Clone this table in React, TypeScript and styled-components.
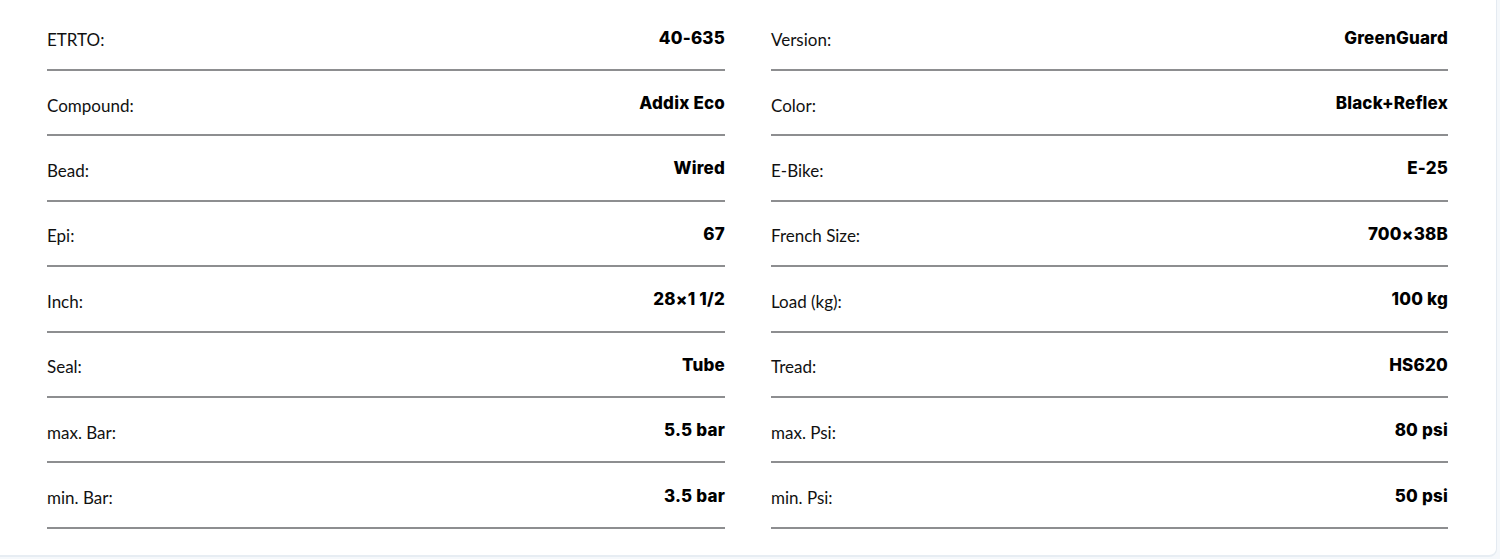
import styled, { createGlobalStyle } from 'styled-components';

const GlobalStyle = createGlobalStyle`
  html, body {
    margin: 0;
    padding: 0;
    background: #f5f8fb;
  }
  * {
    box-sizing: border-box;
  }
`;

interface Spec {
  label: string;
  value: string;
}

const leftSpecs: Spec[] = [
  { label: 'ETRTO:', value: '40-635' },
  { label: 'Compound:', value: 'Addix Eco' },
  { label: 'Bead:', value: 'Wired' },
  { label: 'Epi:', value: '67' },
  { label: 'Inch:', value: '28×1 1/2' },
  { label: 'Seal:', value: 'Tube' },
  { label: 'max. Bar:', value: '5.5 bar' },
  { label: 'min. Bar:', value: '3.5 bar' },
];

const rightSpecs: Spec[] = [
  { label: 'Version:', value: 'GreenGuard' },
  { label: 'Color:', value: 'Black+Reflex' },
  { label: 'E-Bike:', value: 'E-25' },
  { label: 'French Size:', value: '700×38B' },
  { label: 'Load (kg):', value: '100 kg' },
  { label: 'Tread:', value: 'HS620' },
  { label: 'max. Psi:', value: '80 psi' },
  { label: 'min. Psi:', value: '50 psi' },
];

function SpecColumn({ specs }: { specs: Spec[] }) {
  return (
    <Column>
      {specs.map((s) => (
        <Row key={s.label}>
          <Label>{s.label}</Label>
          <Value>{s.value}</Value>
        </Row>
      ))}
    </Column>
  );
}

export default function App() {
  return (
    <>
      <GlobalStyle />
      <Card>
        <SpecColumn specs={leftSpecs} />
        <SpecColumn specs={rightSpecs} />
      </Card>
    </>
  );
}

const Card = styled.section`
  width: 1497px;
  height: 557px;
  background: #ffffff;
  border-right: 1px solid #e4eaf1;
  border-bottom: 2px solid #e7edf3;
  border-bottom-right-radius: 8px;
  padding: 5.4px 48px 0 47px;
  display: grid;
  grid-template-columns: 678px 677px;
  column-gap: 46px;
`;

const Column = styled.div`
  display: flex;
  flex-direction: column;
`;

const Row = styled.div`
  height: 65.43px;
  display: flex;
  align-items: center;
  justify-content: space-between;
  padding-top: 3px;
  border-bottom: 2px solid #8d8e90;
`;

const Label = styled.span`
  font-family: 'Lato', 'Liberation Sans', sans-serif;
  font-size: 17px;
  color: #111;
  padding-top: 2px;
`;

const Value = styled.span`
  font-family: 'Inter', 'Liberation Sans', sans-serif;
  font-size: 17px;
  font-weight: 800;
  letter-spacing: 0.2px;
  color: #000;
  margin-top: -2px;
`;
